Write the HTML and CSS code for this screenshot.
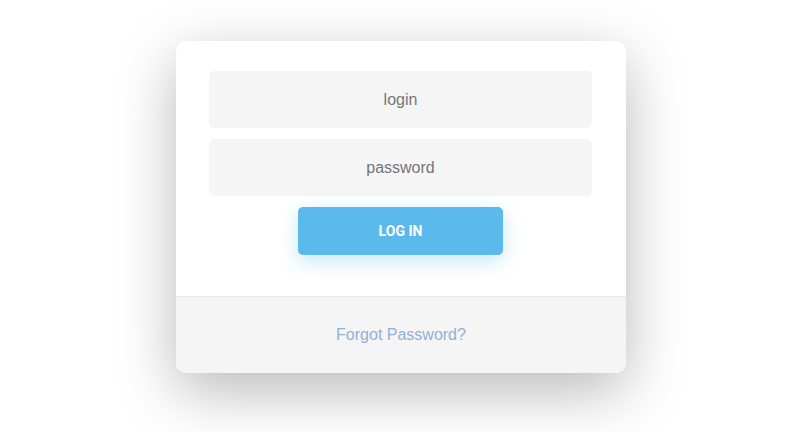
FILE: index.html
```html
<!DOCTYPE html>
<html lang="en">
<head>
    <meta charset="UTF-8">
    <meta name="viewport" content="width=device-width, initial-scale=1.0">
    <title>Login</title>
    <link rel="stylesheet" href="styles.css">
</head>
<body>
    <div class="card">
        <form class="login-form" onsubmit="return false">
            <input class="field" type="text" placeholder="login">
            <input class="field" type="password" placeholder="password">
            <button class="login-btn" type="submit">LOG IN</button>
        </form>
        <div class="card-footer">
            <a href="#" class="forgot">Forgot Password?</a>
        </div>
    </div>
</body>
</html>
```

FILE: styles.css
```css
body {
    font-family: 'Liberation Sans', Arial, sans-serif;
    background-color: #ffffff;
    margin: 0;
    padding-top: 41px;
    height: 432px;
    box-sizing: border-box;
    overflow: hidden;
}

.card {
    width: 450px;
    margin: 0 auto;
    background-color: #fff;
    border-radius: 10px;
    box-shadow: 0 18px 60px rgba(0, 0, 0, 0.28);
    overflow: hidden;
    transform: translateX(1px);
}

.login-form {
    display: flex;
    flex-direction: column;
    align-items: center;
    gap: 11px;
    padding: 30px 34px 41px 33px;
}

.field {
    width: 100%;
    height: 57px;
    box-sizing: border-box;
    border: none;
    border-radius: 5px;
    background-color: #f5f5f5;
    font-family: 'Liberation Sans', Arial, sans-serif;
    font-size: 16px;
    text-align: center;
    outline: none;
    color: #555;
}

.field::placeholder {
    color: #757575;
}

.login-btn {
    width: 205px;
    height: 48px;
    border: none;
    border-radius: 5px;
    background-color: #5bb9ec;
    color: #fff;
    font-family: Roboto, 'Liberation Sans', sans-serif;
    font-weight: 700;
    font-size: 14px;
    cursor: pointer;
    box-shadow: 0 6px 20px rgba(91, 185, 236, 0.35);
}

.card-footer {
    border-top: 1px solid #e1e8ee;
    background-color: #f5f5f5;
    height: 76px;
    display: flex;
    align-items: center;
    justify-content: center;
}

.forgot {
    color: #8fb1d6;
    font-size: 16px;
    text-decoration: none;
}
```
